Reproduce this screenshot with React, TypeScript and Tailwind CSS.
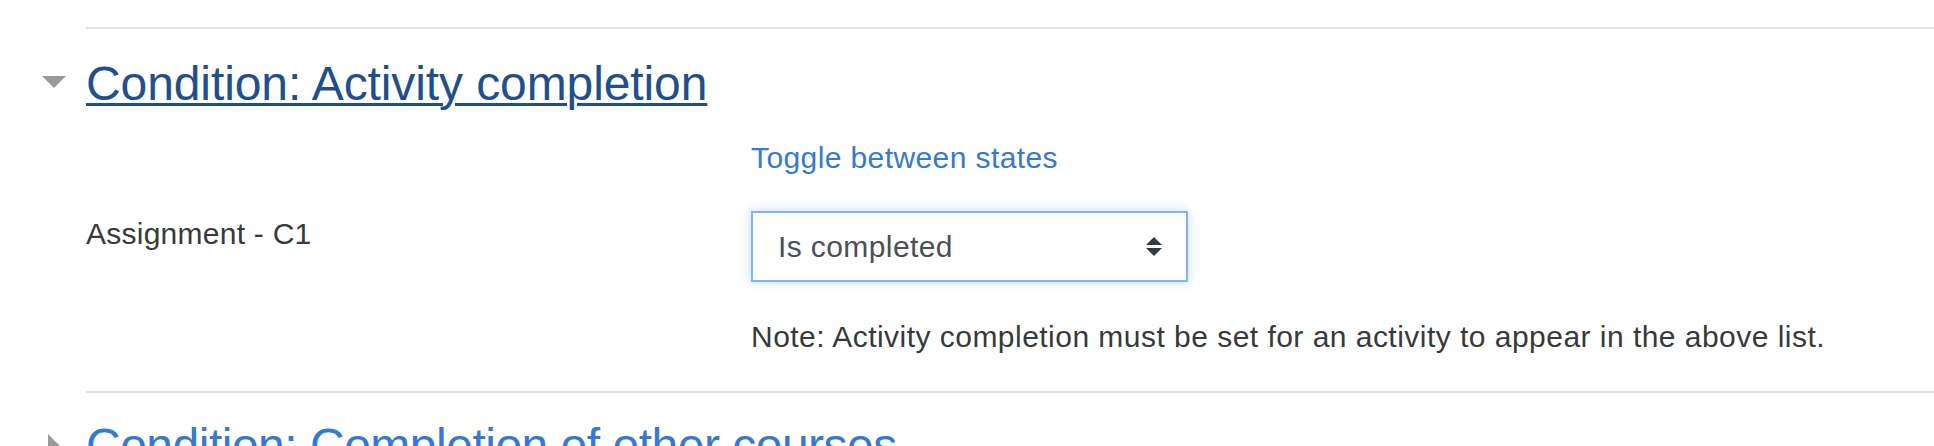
function SortArrows() {
    return (
        <svg width="16" height="19" viewBox="0 0 16 19">
            <path d="M8 0L16 8H0z" fill="#343a40" />
            <path d="M0 11H16L8 19z" fill="#343a40" />
        </svg>
    )
}

export default function App() {
    return (
        <div className="h-[446px] w-full overflow-hidden bg-white font-['Liberation_Sans',Arial,sans-serif] text-[#373a3c]">

            <div className="pt-[27px] pl-[86px]">
                <div className="h-[2px] bg-[#dee2e6]" />
            </div>

            {/* expanded section */}
            <div className="mt-[26px] flex h-[58px] items-center pl-[42px]">
                <svg width="24" height="12" viewBox="0 0 24 12" className="mr-[20px] -mt-[4px] shrink-0">
                    <path d="M0 0H24L12 12z" fill="#9a9a9a" />
                </svg>
                <a href="#" className="text-[48px] leading-[58px] tracking-[-0.1px] text-[#1f4f8c] underline decoration-[3px] underline-offset-[3px]">
                    Condition: Activity completion
                </a>
            </div>

            <div className="mt-[22px] pl-[86px] text-[30px] leading-[45px] tracking-[0.4px]">
                <div className="flex">
                    <div className="w-[665px] shrink-0" />
                    <a href="#" className="text-[#3579d0]">Toggle between states</a>
                </div>

                <div className="mt-[31px] flex">
                    <div className="w-[665px] shrink-0 tracking-[0.25px]">Assignment - C1</div>
                    <div>
                        <div className="flex h-[71px] w-[437px] items-center justify-between border-2 border-[#80b5f2] bg-white pl-[25px] pr-[24px] text-[#495057] shadow-[0_0_10px_rgba(80,150,235,0.35)]">
                            <span>Is completed</span>
                            <SortArrows />
                        </div>
                        <div className="mt-[32px] whitespace-nowrap tracking-[0.47px]">
                            Note: Activity completion must be set for an activity to appear in the above list.
                        </div>
                    </div>
                </div>
            </div>

            <div className="mt-[32px] pl-[86px]">
                <div className="h-[2px] bg-[#dee2e6]" />
            </div>

            {/* collapsed section */}
            <div className="mt-[24px] flex h-[58px] items-center pl-[48px]">
                <svg width="12" height="24" viewBox="0 0 12 24" className="mr-[26px] shrink-0">
                    <path d="M0 0L12 12L0 24z" fill="#9a9a9a" />
                </svg>
                <a href="#" className="text-[48px] leading-[58px] tracking-[-0.5px] text-[#3579d0]">
                    Condition: Completion of other courses
                </a>
            </div>

        </div>
    )
}
